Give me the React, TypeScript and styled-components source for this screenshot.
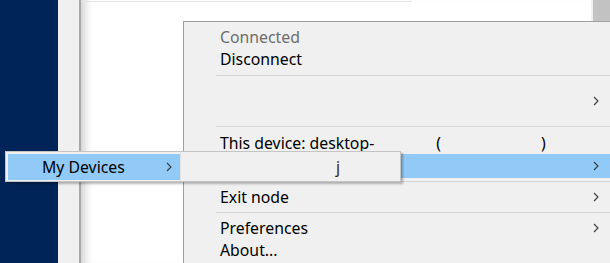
import React from "react";
import styled, { createGlobalStyle } from "styled-components";

const Global = createGlobalStyle`
  html, body { margin: 0; padding: 0; background: #ffffff; }
  body { font-family: "Noto Sans", "Open Sans", sans-serif; }
`;

const Screen = styled.div`
  position: relative;
  width: 610px;
  height: 263px;
  overflow: hidden;
  display: flex;
`;

const NavStrip = styled.div`
  width: 58px;
  flex: none;
  background: #002457;
`;

const Gutter = styled.div`
  width: 21px;
  flex: none;
  background: #f0f0f0;
`;

const Content = styled.div`
  flex: 1;
  display: flex;
  background: #ffffff;
  border-left: 2px solid #a8a8a8;
  box-shadow: inset 10px 0 8px -6px rgba(0, 0, 0, 0.18);
`;

const Main = styled.div`
  flex: 1;
  padding-top: 1px;
`;

const TopRule = styled.div`
  width: 331px;
  height: 1px;
  background: #e6e6e6;
`;

const ScrollTrack = styled.div`
  width: 17px;
  flex: none;
  padding-left: 2px;
  background: #f0f0f0;
  display: flex;
`;

const ScrollThumb = styled.div`
  flex: 1;
  background: #c2c2c2;
`;

const Menu = styled.div`
  position: absolute;
  left: 183px;
  top: 21px;
  width: 426px;
  height: 260px;
  padding: 4px 4px 0 0;
  background: #f0f0f0;
  border: 1px solid #a0a0a0;
  display: flex;
  flex-direction: column;
  font-size: 15.8px;
  color: #000000;
`;

const Row = styled.div<{ $h: number; $dim?: boolean; $active?: boolean }>`
  height: ${(p) => p.$h}px;
  flex: none;
  display: flex;
  align-items: center;
  padding-left: 36px;
  padding-right: 11px;
  color: ${(p) => (p.$dim ? "#6d6d6d" : "#000000")};
  background: ${(p) => (p.$active ? "#91c9f7" : "transparent")};
  white-space: pre;
`;

const Label = styled.span`
  flex: 1;
`;

const Blank = styled.span<{ $w: number }>`
  display: inline-block;
  width: ${(p) => p.$w}px;
`;

const Separator = styled.div<{ $top: number; $bottom: number }>`
  height: 1px;
  flex: none;
  margin: ${(p) => p.$top}px 0 ${(p) => p.$bottom}px 32px;
  background: #d5d5d5;
`;

const Popup = styled.div`
  position: absolute;
  left: 5px;
  top: 151px;
  width: 394px;
  height: 29px;
  background: #f0f0f0;
  border: 1px solid #c4c4c4;
  box-shadow: 2px 2px 2px rgba(0, 0, 0, 0.28);
  display: flex;
  font-size: 15.8px;
`;

const PopupItem = styled.div`
  width: 172px;
  margin: 2px 0 1px 2px;
  background: #91c9f7;
  display: flex;
  align-items: center;
  padding-left: 34px;
  padding-right: 8px;
  box-sizing: border-box;
  color: #000000;
`;

const PopupDivider = styled.div`
  width: 1px;
  background: #e2e2e2;
`;

const PopupPanel = styled.div`
  flex: 1;
  display: flex;
  align-items: center;
  padding-left: 155px;
  color: #3a2400;
`;

const Chevron = () => (
  <svg width="6" height="10" viewBox="0 0 6 10" style={{ flex: "none" }}>
    <path d="M1 1 L5 5 L1 9" fill="none" stroke="#3a3a3a" strokeWidth="1.1" />
  </svg>
);

export default function App() {
  return (
    <>
      <Global />
      <Screen>
        <NavStrip />
        <Gutter />
        <Content>
          <Main>
            <TopRule />
          </Main>
          <ScrollTrack>
            <ScrollThumb />
          </ScrollTrack>
        </Content>

        <Menu>
          <Row $h={22} $dim>
            <Label>Connected</Label>
          </Row>
          <Row $h={21}>
            <Label>Disconnect</Label>
          </Row>
          <Separator $top={6} $bottom={4} />
          <Row $h={42}>
            <Label />
            <Chevron />
          </Row>
          <Separator $top={4} $bottom={4} />
          <Row $h={23}>
            <Label>
              This device: desktop-<Blank $w={62} />(<Blank $w={100} />)
            </Label>
          </Row>
          <Row $h={24} $active>
            <Label />
            <Chevron />
          </Row>
          <Separator $top={3} $bottom={4} />
          <Row $h={22}>
            <Label>Exit node</Label>
            <Chevron />
          </Row>
          <Separator $top={4} $bottom={4} />
          <Row $h={22}>
            <Label>Preferences</Label>
            <Chevron />
          </Row>
          <Row $h={21}>
            <Label>About...</Label>
          </Row>
        </Menu>

        <Popup>
          <PopupItem>
            <Label>My Devices</Label>
            <Chevron />
          </PopupItem>
          <PopupDivider />
          <PopupPanel>j</PopupPanel>
        </Popup>
      </Screen>
    </>
  );
}
